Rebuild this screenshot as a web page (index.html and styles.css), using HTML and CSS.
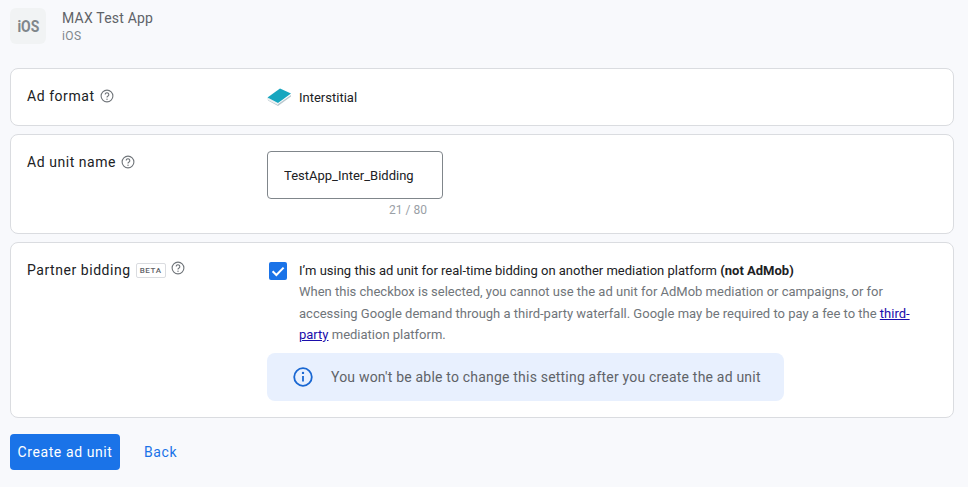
FILE: index.html
```html
<!DOCTYPE html>
<html>
<head>
  <title>Create ad unit</title>
  <meta charset="UTF-8">
  <link rel="stylesheet" href="styles.css">
</head>
<body>
  <div class="app-header">
    <div class="app-icon"><span>iOS</span></div>
    <div class="app-info">
      <div class="app-name">MAX Test App</div>
      <div class="app-platform">iOS</div>
    </div>
  </div>

  <div class="card card-format">
    <div class="card-label label-format">
      <span>Ad format</span>
      <svg class="help" viewBox="0 0 14 14"><circle cx="7" cy="7" r="5.9"/><path d="M5.2 5.5a1.8 1.8 0 1 1 2.8 1.5c-.7.4-1 .8-1 1.5"/><circle class="dot" cx="7" cy="10.3" r=".7"/></svg>
    </div>
    <div class="card-body format-value">
      <svg class="book" viewBox="0 0 24 18">
        <path d="M0.5 10 L11 16 L24 7 L24 8.5 L11 18 L1 12.5 Z" fill="#b9c8cf"/>
        <path d="M0.5 10 L11 15.2 L11 17 L1 12 Z" fill="#eef2f3"/>
        <path d="M0.5 9.6 L13 0.5 L24 5.4 L11 15 Z" fill="#17a6bf"/>
      </svg>
      <span>Interstitial</span>
    </div>
  </div>

  <div class="card card-name">
    <div class="card-label">
      <span>Ad unit name</span>
      <svg class="help" viewBox="0 0 14 14"><circle cx="7" cy="7" r="5.9"/><path d="M5.2 5.5a1.8 1.8 0 1 1 2.8 1.5c-.7.4-1 .8-1 1.5"/><circle class="dot" cx="7" cy="10.3" r=".7"/></svg>
    </div>
    <div class="card-body">
      <div class="name-field">
        <input class="name-input" type="text" value="TestApp_Inter_Bidding">
        <div class="counter">21 / 80</div>
      </div>
    </div>
  </div>

  <div class="card card-bidding">
    <div class="card-label">
      <span>Partner bidding</span>
      <span class="beta">BETA</span>
      <svg class="help help-raised" viewBox="0 0 14 14"><circle cx="7" cy="7" r="5.9"/><path d="M5.2 5.5a1.8 1.8 0 1 1 2.8 1.5c-.7.4-1 .8-1 1.5"/><circle class="dot" cx="7" cy="10.3" r=".7"/></svg>
    </div>
    <div class="card-body">
      <div class="check-row">
        <span class="checkbox">
          <svg viewBox="0 0 18 18"><path d="M3.6 9.2 L7.4 13 L14.6 5.6"/></svg>
        </span>
        <div class="check-text">
          <div class="check-title">I’m using this ad unit for real-time bidding on another mediation platform <b>(not AdMob)</b></div>
          <div class="check-note">When this checkbox is selected, you cannot use the ad unit for AdMob mediation or campaigns, or for accessing Google demand through a third-party waterfall. Google may be required to pay a fee to the <a href="#">third-party</a> mediation platform.</div>
        </div>
      </div>
      <div class="notice">
        <svg class="notice-icon" viewBox="0 0 20 20"><circle cx="10" cy="10" r="8.8"/><path d="M10 9v5.4"/><circle class="dot" cx="10" cy="5.9" r="1.2"/></svg>
        <span>You won't be able to change this setting after you create the ad unit</span>
      </div>
    </div>
  </div>

  <div class="actions">
    <button class="btn-create">Create ad unit</button>
    <a class="btn-back" href="#">Back</a>
  </div>
</body>
</html>
```

FILE: styles.css
```css
body {
  margin: 0;
  padding: 0 14px 0 10px;
  height: 487px;
  box-sizing: border-box;
  overflow: hidden;
  background-color: #f8f9fc;
  font-family: Roboto, 'Liberation Sans', sans-serif;
  font-size: 13px;
  color: #202124;
}
.app-header {
  display: flex;
  align-items: flex-start;
  height: 68px;
  padding-top: 8px;
  box-sizing: border-box;
}
.app-icon {
  display: flex;
  align-items: center;
  justify-content: center;
  width: 36px;
  height: 36px;
  border-radius: 6px;
  background-color: #f1f3f4;
  color: #80868b;
  font-weight: 700;
  font-size: 17px;
}
.app-icon span {
  transform: scaleX(0.82);
}
.app-info {
  margin-left: 16px;
  padding-top: 2px;
}
.app-name {
  font-size: 14px;
  line-height: 17px;
  letter-spacing: 0.2px;
  color: #5f6368;
}
.app-platform {
  margin-top: 1px;
  font-size: 12px;
  line-height: 17px;
  letter-spacing: 0.4px;
  color: #80868b;
}
.card {
  display: flex;
  box-sizing: border-box;
  margin-bottom: 8px;
  background-color: #fff;
  border: 1px solid #dadce0;
  border-radius: 8px;
}
.card-format {
  height: 58px;
  align-items: center;
}
.card-name {
  height: 100px;
  padding-top: 16px;
}
.card-bidding {
  height: 176px;
  padding-top: 16px;
}
.card-label {
  display: flex;
  align-items: center;
  flex: none;
  width: 256px;
  height: 22px;
  padding-left: 16px;
  box-sizing: border-box;
  font-size: 14px;
  letter-spacing: 0.55px;
  color: #202124;
}
.label-format {
  margin-bottom: 2px;
}
.card-body {
  flex: 1;
  min-width: 0;
}
.help {
  width: 14px;
  height: 14px;
  margin-left: 5px;
  fill: none;
  stroke: #70757a;
  stroke-width: 1.1;
}
.help .dot, .notice-icon .dot {
  stroke: none;
}
.help .dot {
  fill: #70757a;
}
.help-raised {
  margin-left: 5px;
  margin-bottom: 4px;
}
.beta {
  margin-left: 5px;
  padding: 0 3px;
  border: 1px solid #dadce0;
  border-radius: 2px;
  font-size: 8px;
  font-weight: 500;
  line-height: 13px;
  letter-spacing: 0.6px;
  color: #5f6368;
}
.format-value {
  display: flex;
  align-items: center;
  font-size: 13px;
}
.book {
  width: 24px;
  height: 18px;
  margin-right: 8px;
}
.name-field {
  width: 176px;
}
.name-input {
  display: block;
  width: 100%;
  height: 48px;
  box-sizing: border-box;
  padding: 0 16px;
  margin: 0;
  border: 1px solid #80868b;
  border-radius: 4px;
  background: #fff;
  font-family: inherit;
  font-size: 13px;
  color: #202124;
}
.counter {
  margin-top: 4px;
  padding-right: 16px;
  text-align: right;
  font-size: 12px;
  color: #9aa0a6;
}
.check-row {
  display: flex;
}
.checkbox {
  flex: none;
  width: 18px;
  height: 18px;
  margin: 3px 12px 0 2px;
  border-radius: 2px;
  background-color: #1a73e8;
}
.checkbox svg {
  display: block;
  fill: none;
  stroke: #fff;
  stroke-width: 2;
}
.check-text {
  max-width: 611px;
}
.check-title {
  font-size: 13px;
  line-height: 20px;
  margin-top: 2px;
}
.check-note {
  font-size: 13px;
  line-height: 21.5px;
  color: #70757a;
}
.check-note a {
  color: #1a0dab;
}
.notice {
  display: flex;
  align-items: center;
  width: 517px;
  height: 48px;
  margin-top: 7px;
  padding-left: 26px;
  box-sizing: border-box;
  border-radius: 8px;
  background-color: #e8f0fe;
  font-size: 14px;
  letter-spacing: 0.2px;
  color: #5f6368;
}
.notice-icon {
  width: 20px;
  height: 20px;
  margin-right: 18px;
  fill: none;
  stroke: #1967d2;
  stroke-width: 1.8;
}
.notice-icon .dot {
  fill: #1967d2;
}
.actions {
  display: flex;
  align-items: center;
  margin-top: 16px;
}
.btn-create {
  width: 110px;
  height: 36px;
  border: none;
  border-radius: 4px;
  background-color: #1a73e8;
  color: #fff;
  font-family: inherit;
  font-size: 14px;
  letter-spacing: 0.6px;
  cursor: pointer;
}
.btn-back {
  margin-left: 24px;
  color: #1a73e8;
  font-size: 14px;
  letter-spacing: 0.6px;
  text-decoration: none;
}
```
